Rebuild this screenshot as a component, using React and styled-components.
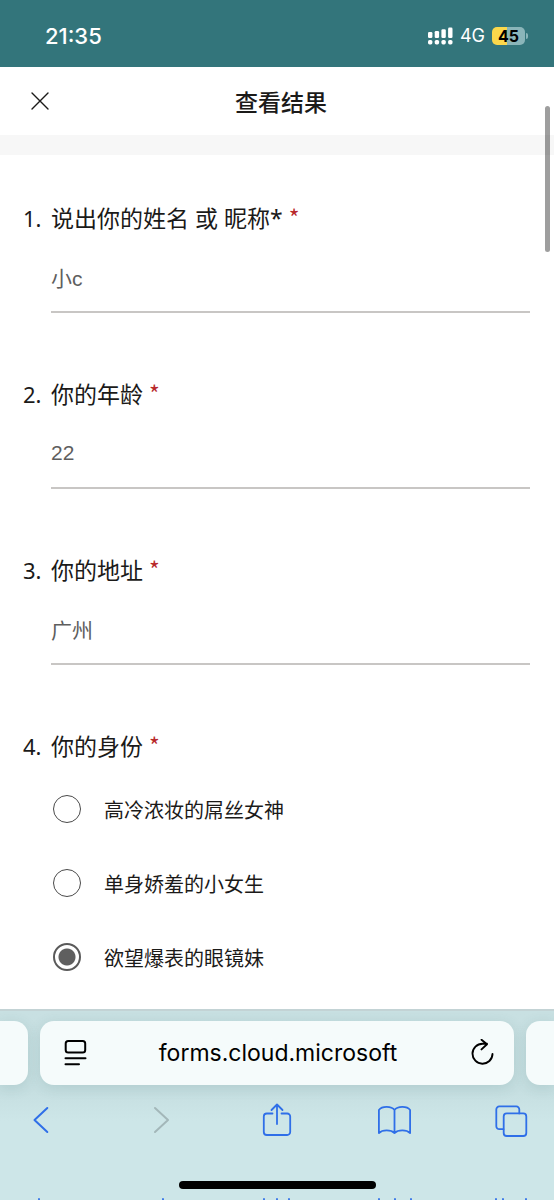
import React, { useState } from 'react';
import styled, { createGlobalStyle, ThemeProvider } from 'styled-components';

const theme = {
  colors: {
    teal: '#33757b',
    text: '#1b1a19',
    answer: '#5e5e5e',
    line: '#c8c6c4',
    required: '#b8282a',
    blue: '#2f6fe8',
    disabled: '#a3b7b9',
    bar: '#cde6e8',
    card: '#f5fbfb',
  },
  font: {
    form: '"Noto Sans", "Noto Sans CJK SC", sans-serif',
    field: '"Liberation Sans", "Noto Sans CJK SC", sans-serif',
    system: 'Inter, "Noto Sans CJK SC", sans-serif',
  },
};

const questions = [
  { id: 'name', title: '说出你的姓名 或 昵称*', answer: '小c' },
  { id: 'age', title: '你的年龄', answer: '22' },
  { id: 'address', title: '你的地址', answer: '广州' },
  {
    id: 'identity',
    title: '你的身份',
    answer: '欲望爆表的眼镜妹',
    options: ['高冷浓妆的屌丝女神', '单身娇羞的小女生', '欲望爆表的眼镜妹'],
  },
];

const GlobalStyle = createGlobalStyle`
  * {
    box-sizing: border-box;
  }
  body {
    margin: 0;
    background: #fff;
  }
`;

const Screen = styled.div`
  display: flex;
  flex-direction: column;
  min-height: 100vh;
  overflow: hidden;
  color: ${({ theme: { colors } }) => colors.text};
  font-family: ${({ theme: { font } }) => font.form};
`;

const StatusBar = styled.div`
  display: flex;
  align-items: center;
  justify-content: space-between;
  height: 67px;
  padding: 4px 26px 0 45px;
  background: ${({ theme: { colors } }) => colors.teal};
  color: #fff;
  font-family: ${({ theme: { font } }) => font.system};
`;

const Time = styled.time`
  font-size: 22px;
  font-weight: 500;
`;

const StatusIcons = styled.div`
  display: flex;
  align-items: center;
  gap: 7px;
  font-size: 18px;
`;

const Battery = styled.div`
  display: flex;
  align-items: center;
  gap: 1px;

  &::after {
    content: '';
    width: 2px;
    height: 6px;
    border-radius: 0 2px 2px 0;
    background: #8ab5b9;
  }
`;

const BatteryLevel = styled.span`
  width: 33px;
  border-radius: 5px;
  background: linear-gradient(to right, #fbd84b 45%, #8ab5b9 45%);
  color: #000;
  font-size: 16px;
  font-weight: 700;
  line-height: 18px;
  text-align: center;
`;

const Header = styled.header`
  display: grid;
  grid-template-columns: 56px 1fr 48px;
  align-items: center;
  height: 68px;
`;

const CloseButton = styled.button`
  display: flex;
  justify-content: flex-end;
  padding: 0 7px 0 0;
  border: 0;
  background: none;
  color: inherit;
`;

const PageTitle = styled.h1`
  margin: 0;
  padding-top: 2px;
  font-size: 23px;
  font-weight: 500;
  line-height: 32px;
  text-align: center;
`;

const Divider = styled.div`
  height: 20px;
  background: #f7f7f7;
`;

const Viewport = styled.main`
  position: relative;
  flex: 1;
`;

const ScrollThumb = styled.div`
  position: absolute;
  top: 39px;
  right: 4px;
  width: 5px;
  height: 146px;
  border-radius: 3px;
  background: rgba(0, 0, 0, 0.38);
`;

const Questions = styled.form`
  display: grid;
  gap: 65px;
  padding: 47px 24px 16px 23px;
`;

const Question = styled.section`
  display: grid;
  grid-template-columns: 28px 1fr;
`;

const Title = styled.div`
  font-size: 23px;
  line-height: 32px;
`;

const Number = styled(Title)`
  font-size: 22px;
`;

const Required = styled.span`
  color: ${({ theme: { colors } }) => colors.required};
  font-family: "Noto Sans CJK SC", sans-serif;
  font-size: 23px;
  line-height: 23px;
`;

const Answer = styled.input`
  grid-column: 2;
  width: 100%;
  height: 63px;
  margin-top: 16px;
  padding: 0 0 7px;
  border: 0;
  border-bottom: 2px solid ${({ theme: { colors } }) => colors.line};
  border-radius: 0;
  outline: 0;
  background: none;
  color: ${({ theme: { colors } }) => colors.answer};
  font-family: ${({ theme: { font } }) => font.field};
  font-size: 21px;
`;

const Options = styled.div`
  display: grid;
  grid-column: 2;
  gap: 42px;
  padding-top: 31px;
`;

const Option = styled.label`
  display: flex;
  align-items: center;
  gap: 23px;
  padding-left: 2px;
  font-size: 20px;
  line-height: 28px;
`;

const OptionText = styled.span`
  padding-top: 4px;
`;

const Radio = styled.input`
  flex: none;
  width: 28px;
  height: 28px;
  margin: 0;
  border: 1px solid #4a4a4a;
  border-radius: 50%;
  appearance: none;

  &:checked {
    border: 2px solid #5a5a5a;
    background: radial-gradient(circle, #5f5f5f 8px, transparent 9px);
  }
`;

const BrowserBar = styled.footer`
  position: sticky;
  bottom: 0;
  border-top: 2px solid #c3d3d5;
  background: ${({ theme: { colors } }) => colors.bar};
  background: linear-gradient(#c8e0e2, #c6dfe1 80px, #cde6e8 110px);
`;

const Tabs = styled.div`
  display: grid;
  grid-template-columns: 28px 1fr 28px;
  gap: 12px;
  padding-top: 10px;
`;

const TabCard = styled.div`
  display: flex;
  align-items: center;
  justify-content: space-between;
  height: 64px;
  padding: ${({ $side }) => ($side ? '0' : '0 18px 0 20px')};
  border-radius: ${({ $side }) => {
    if ($side === 'left') return '0 14px 14px 0';
    if ($side === 'right') return '14px 0 0 14px';
    return '14px';
  }};
  background: ${({ theme: { colors } }) => colors.card};
  box-shadow: 0 3px 14px rgba(40, 90, 95, 0.14);
`;

const IconButton = styled.button`
  display: flex;
  padding: 0;
  border: 0;
  background: none;
  color: ${({ theme: { colors }, disabled, $dark }) => {
    if (disabled) return colors.disabled;
    return $dark ? '#000' : colors.blue;
  }};
`;

const Address = styled.span`
  color: #000;
  font-family: ${({ theme: { font } }) => font.system};
  font-size: 23px;
`;

const Toolbar = styled.nav`
  display: flex;
  justify-content: space-between;
  padding: 17px 25px 0;
`;

const HomeIndicator = styled.div`
  width: 197px;
  height: 8px;
  margin: 43px auto 9px;
  border-radius: 4px;
  background: #000;
`;

const ToolbarEdge = styled.div`
  display: flex;
  justify-content: space-between;
  padding: 0 25px;
  color: ${({ theme: { colors } }) => colors.blue};
`;

const Icon = ({ size = 36, width = size, children }) => (
  <svg
    width={width}
    height={size}
    viewBox={`0 0 ${width} ${size}`}
    fill="none"
    stroke="currentColor"
    strokeWidth="1.8"
    strokeLinecap="round"
    strokeLinejoin="round"
    aria-hidden="true"
  >
    {children}
  </svg>
);

const SignalIcon = () => (
  <svg width="25" height="18" viewBox="0 0 25 18" fill="#fff" aria-hidden="true">
    {[[0, 5], [6.7, 4], [13.4, 2.2], [20.1, 0.6]].map(([x, y]) => (
      <React.Fragment key={x}>
        <rect x={x} y={y} width="4.4" height={11 - y} rx="1.3" />
        <rect x={x} y="13" width="4.4" height="4.4" rx="1.6" />
      </React.Fragment>
    ))}
  </svg>
);

const tools = [
  { label: '后退', path: <path d="M22.3 6 9.5 18l12.8 12" strokeWidth="2" /> },
  { label: '前进', disabled: true, path: <path d="m12 6 13 12-13 12" strokeWidth="2" /> },
  {
    label: '分享',
    path: <path d="M12.5 11.5H6.8a3 3 0 0 0-3 3V30a3 3 0 0 0 3 3h20.4a3 3 0 0 0 3-3V14.500a3 3 0 0 0-3-3h-5.700M17 22V2.500M11.500 8 17 2.500 22.500 8" />,
  },
  {
    label: '书签',
    path: <path d="M16.5 8C13.5 4 4 3.800.9 8v23c3.500-3.500 12-3.500 15.600 0 3.600-3.500 12.100-3.500 15.600 0V8C29 3.800 19.500 4 16.500 8v23" />,
  },
  {
    label: '标签页',
    path: (
      <>
        <path d="M8.5 27.200H4.300a3 3 0 0 1-3-3V7.400a3 3 0 0 1 3-3h17a3 3 0 0 1 3 3v4" />
        <rect x="8.7" y="11.4" width="22.6" height="22.6" rx="3" />
      </>
    ),
  },
];

// slivers of the toolbar that repeat under the home indicator
const edges = [[14], [20], [4, 17, 29], [1, 17, 33], [1, 8, 31]];

const QuestionItem = ({ index, question }) => {
  const { id, title, answer, options } = question;
  const [selected, setSelected] = useState(answer);

  return (
    <Question>
      <Number>{`${index + 1}.`}</Number>
      <Title as={options ? 'div' : 'label'} id={`${id}-title`} htmlFor={options ? undefined : id}>
        {title}
        {' '}
        <Required>*</Required>
      </Title>
      {options ? (
        <Options role="radiogroup" aria-labelledby={`${id}-title`}>
          {options.map((option) => (
            <Option key={option}>
              <Radio
                type="radio"
                name={id}
                checked={selected === option}
                onChange={() => setSelected(option)}
              />
              <OptionText>{option}</OptionText>
            </Option>
          ))}
        </Options>
      ) : (
        <Answer id={id} type="text" value={answer} readOnly />
      )}
    </Question>
  );
};

const App = () => (
  <ThemeProvider theme={theme}>
    <GlobalStyle />
    <Screen lang="zh-CN">
      <StatusBar>
        <Time>21:35</Time>
        <StatusIcons>
          <SignalIcon />
          <span>4G</span>
          <Battery>
            <BatteryLevel>45</BatteryLevel>
          </Battery>
        </StatusIcons>
      </StatusBar>
      <Viewport>
        <Header>
          <CloseButton type="button" aria-label="关闭">
            <Icon size={18}>
              <path d="m1 1 16 16M17 1 1 17" strokeWidth="1.4" />
            </Icon>
          </CloseButton>
          <PageTitle>查看结果</PageTitle>
        </Header>
        <Divider />
        <Questions>
          {questions.map((question, index) => (
            <QuestionItem key={question.id} index={index} question={question} />
          ))}
        </Questions>
        <ScrollThumb />
      </Viewport>
      <BrowserBar>
        <Tabs>
          <TabCard $side="left" />
          <TabCard>
            <IconButton type="button" aria-label="页面菜单" $dark>
              <Icon size={28}>
                <rect x="5.7" y="2" width="19.5" height="11.5" rx="2.5" strokeWidth="2" />
                <path d="M5.5 19.2h20M5.5 25.2H19" strokeWidth="2" />
              </Icon>
            </IconButton>
            <Address>forms.cloud.microsoft</Address>
            <IconButton type="button" aria-label="重新加载" $dark>
              <Icon size={28}>
                <path d="M24.5 15a10 10 0 1 1-10-10.300h4.500M13.500.8l5.500 4.400-5.500 5.200" strokeWidth="1.9" />
              </Icon>
            </IconButton>
          </TabCard>
          <TabCard $side="right" />
        </Tabs>
        <Toolbar>
          {tools.map(({ label, disabled, path }) => (
            <IconButton key={label} type="button" aria-label={label} disabled={disabled}>
              <Icon width={34}>{path}</Icon>
            </IconButton>
          ))}
        </Toolbar>
        <HomeIndicator />
        <ToolbarEdge>
          {edges.map((marks) => (
            <Icon key={marks.join()} size={2} width={34}>
              {marks.map((x) => (
                <path key={x} d={`M${x} 1v2`} />
              ))}
            </Icon>
          ))}
        </ToolbarEdge>
      </BrowserBar>
    </Screen>
  </ThemeProvider>
);

export default App;
